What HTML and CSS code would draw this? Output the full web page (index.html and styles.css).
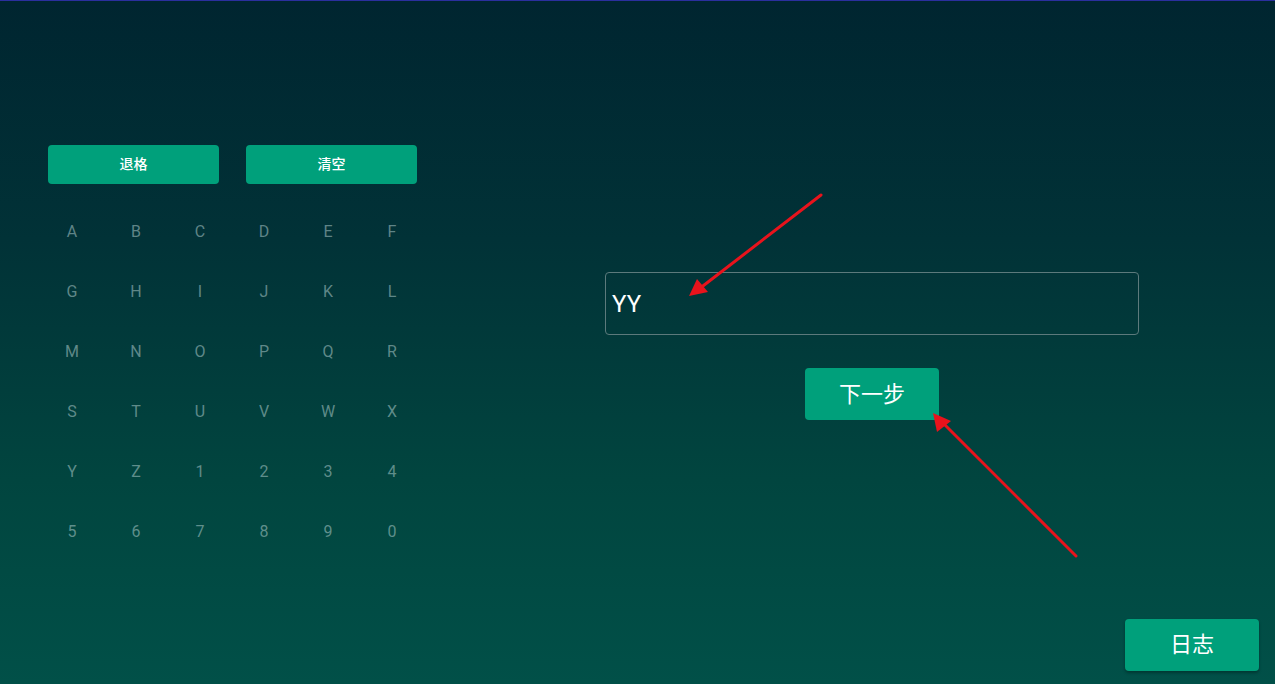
FILE: index.html
```html
<!DOCTYPE html>
<html lang="zh-CN">
<head>
<meta charset="utf-8">
<title>输入</title>
<link rel="stylesheet" href="styles.css">
</head>
<body>
<div class="screen">
  <div class="topline"></div>
  <div class="main">
    <section class="keyboard">
      <div class="actions">
        <button class="btn btn-small">退格</button>
        <button class="btn btn-small">清空</button>
      </div>
      <div class="keys">
        <span class="key">A</span><span class="key">B</span><span class="key">C</span><span class="key">D</span><span class="key">E</span><span class="key">F</span>
        <span class="key">G</span><span class="key">H</span><span class="key">I</span><span class="key">J</span><span class="key">K</span><span class="key">L</span>
        <span class="key">M</span><span class="key">N</span><span class="key">O</span><span class="key">P</span><span class="key">Q</span><span class="key">R</span>
        <span class="key">S</span><span class="key">T</span><span class="key">U</span><span class="key">V</span><span class="key">W</span><span class="key">X</span>
        <span class="key">Y</span><span class="key">Z</span><span class="key">1</span><span class="key">2</span><span class="key">3</span><span class="key">4</span>
        <span class="key">5</span><span class="key">6</span><span class="key">7</span><span class="key">8</span><span class="key">9</span><span class="key">0</span>
      </div>
    </section>
    <section class="form">
      <div class="field">YY</div>
      <button class="btn btn-next">下一步</button>
    </section>
  </div>
  <footer class="footer">
    <button class="btn btn-log">日志</button>
  </footer>
  <svg class="annotations" viewBox="0 0 1275 684" width="1275" height="684">
    <line x1="821" y1="195" x2="699" y2="289" stroke="#e8131c" stroke-width="3" stroke-linecap="round"/>
    <polygon points="689,296 697,279 708,292" fill="#e8131c"/>
    <line x1="1076" y1="556" x2="942" y2="422" stroke="#e8131c" stroke-width="3" stroke-linecap="round"/>
    <polygon points="933,413 937,432 951,421" fill="#e8131c"/>
  </svg>
</div>
</body>
</html>
```

FILE: styles.css
```css
* { box-sizing: border-box; }

html, body {
  margin: 0;
  padding: 0;
}

body {
  font-family: Roboto, "Noto Sans CJK SC", sans-serif;
}

.screen {
  position: relative;
  width: 1275px;
  height: 684px;
  overflow: hidden;
  display: flex;
  flex-direction: column;
  background: linear-gradient(180deg, #002530 0%, #013237 35%, #01453f 70%, #015048 100%);
}

.topline {
  height: 1px;
  background: #2b2f9e;
  flex: none;
}

.main {
  flex: 1;
  display: flex;
}

.keyboard {
  margin-left: 40px;
  margin-top: 144px;
  width: 384px;
}

.actions {
  display: flex;
  gap: 27px;
  padding: 0 7px 0 8px;
}

.btn {
  border: none;
  background: #00a07b;
  color: #ffffff;
  font-family: "Noto Sans CJK SC", sans-serif;
  border-radius: 4px;
  cursor: pointer;
  padding: 0;
  line-height: 1;
}

.btn-small {
  width: 171px;
  height: 39px;
  font-size: 14px;
  font-weight: 500;
  padding-bottom: 4px;
}

.keys {
  margin-top: 17px;
  display: grid;
  grid-template-columns: repeat(6, 64px);
  grid-auto-rows: 60px;
}

.key {
  display: flex;
  align-items: center;
  justify-content: center;
  font-family: Roboto, sans-serif;
  font-size: 16px;
  color: rgba(190, 215, 215, 0.5);
}

.form {
  margin-left: 181px;
  margin-top: 271px;
  width: 534px;
  display: flex;
  flex-direction: column;
  align-items: center;
}

.field {
  width: 534px;
  height: 63px;
  border: 1px solid #5c7a7c;
  border-radius: 4px;
  padding-left: 6px;
  display: flex;
  align-items: center;
  font-family: Roboto, sans-serif;
  font-size: 24px;
  color: #ffffff;
}

.btn-next {
  margin-top: 33px;
  width: 134px;
  height: 52px;
  font-size: 22px;
  padding-bottom: 4px;
}

.footer {
  display: flex;
  justify-content: flex-end;
  padding: 0 16px 13px 0;
}

.btn-log {
  width: 134px;
  height: 52px;
  font-size: 22px;
  padding-bottom: 6px;
  box-shadow: 0 2px 3px rgba(0, 0, 0, 0.3);
}

.annotations {
  position: absolute;
  left: 0;
  top: 0;
  pointer-events: none;
}
```
